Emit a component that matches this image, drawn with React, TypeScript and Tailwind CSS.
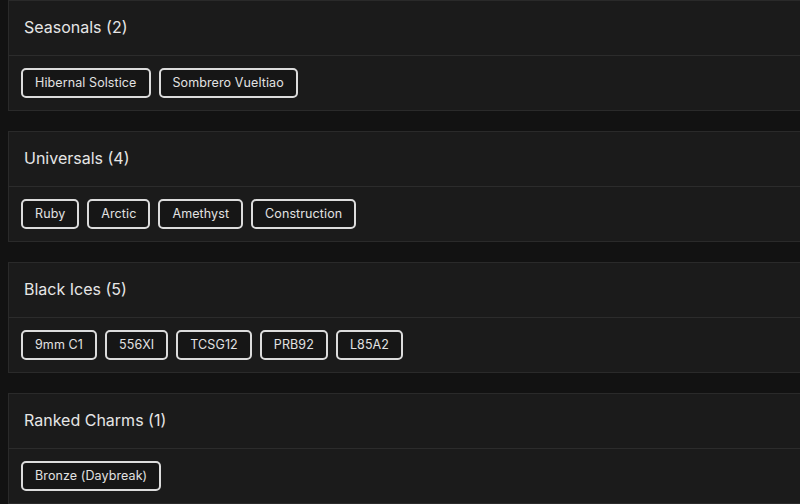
const sections = [
  { title: "Seasonals", items: ["Hibernal Solstice", "Sombrero Vueltiao"] },
  { title: "Universals", items: ["Ruby", "Arctic", "Amethyst", "Construction"] },
  { title: "Black Ices", items: ["9mm C1", "556XI", "TCSG12", "PRB92", "L85A2"] },
  { title: "Ranked Charms", items: ["Bronze (Daybreak)"] },
];

function Chip({ label }: { label: string }) {
  return (
    <span className="flex h-[30px] items-center rounded-[5px] border-2 border-[#dcdcdc] bg-[#161616] px-[12px] pt-px text-[12.5px] tracking-[0.1px] text-[#e2e2e2]">
      {label}
    </span>
  );
}

export default function App() {
  return (
    <div
      className="h-[504px] w-[800px] overflow-hidden bg-[#121212] pl-2"
      style={{ fontFamily: "Inter, 'Noto Sans', sans-serif" }}
    >
      <div className="flex w-[820px] flex-col gap-5">
        {sections.map((s) => (
          <section key={s.title} className="border border-[#2a2a2a] bg-[#1b1b1b]">
            <div className="flex h-[55px] items-center border-b border-[#2c2c2c] px-[15px] pb-0.5">
              <h2 className="text-[16px] font-normal text-[#e6e6e6]">
                {s.title} ({s.items.length})
              </h2>
            </div>
            <div className="flex gap-2 px-3 py-3">
              {s.items.map((i) => (
                <Chip key={i} label={i} />
              ))}
            </div>
          </section>
        ))}
      </div>
    </div>
  );
}
